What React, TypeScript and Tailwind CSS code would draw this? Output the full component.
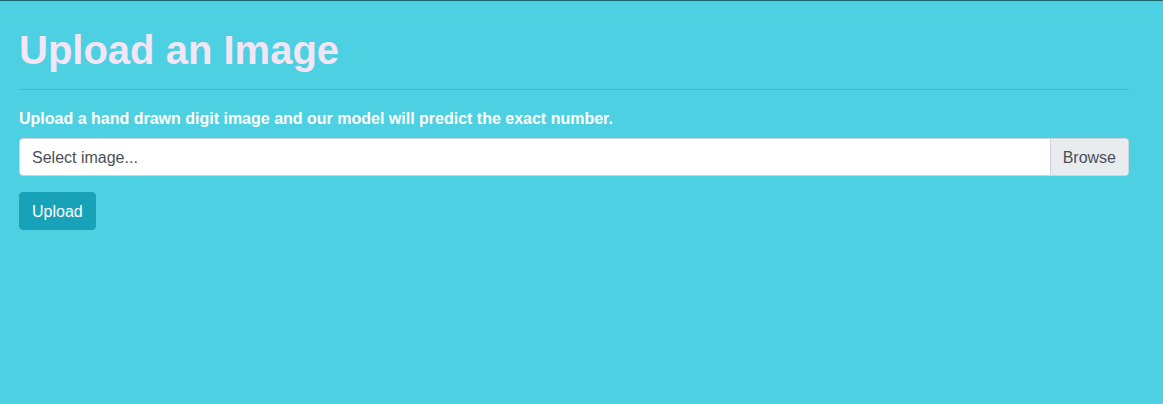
export default function App() {
  return (
    <div
      className="min-h-screen w-full bg-[#4dd0e1] border-t border-[#16666c] pt-[24px] pl-[19px]"
      style={{ fontFamily: '"Liberation Sans", Arial, sans-serif' }}
    >
      <div className="w-[1110px]">
        <h1 className="text-[40px] leading-[1.2] font-bold text-[#f3e5f5] pt-px mb-2">Upload an Image</h1>
        <hr className="mt-[15px] mb-4 border-0 border-t border-black/10" />
        <p className="text-[16px] leading-6 font-bold text-white pt-px mb-[7px]">
          Upload a hand drawn digit image and our model will predict the exact number.
        </p>
        <div className="flex h-[38px] rounded-[4px] border border-[#ced4da] bg-white overflow-hidden">
          <div className="flex-1 flex items-center px-3 pt-[2px] text-[16px] text-[#495057]">Select image...</div>
          <div className="flex items-center px-3 pt-[2px] bg-[#e9ecef] border-l border-[#ced4da] text-[16px] text-[#495057]">
            Browse
          </div>
        </div>
        <button className="mt-4 h-[38px] px-3 pt-[2px] rounded-[4px] bg-[#17a2b8] text-white text-[16px] leading-6 border border-[#17a2b8]">
          Upload
        </button>
      </div>
    </div>
  );
}
